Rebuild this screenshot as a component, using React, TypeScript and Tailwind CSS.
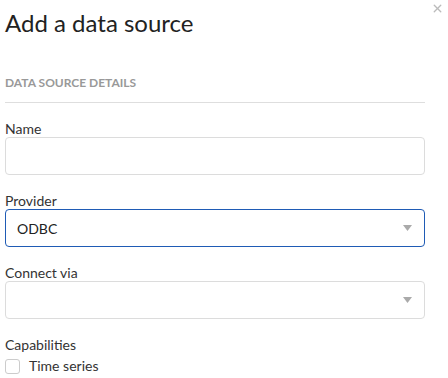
import { X } from "lucide-react";

function Field({ label, children }: { label: string; children: React.ReactNode }) {
  return (
    <div className="flex flex-col">
      <label className="text-[14px] leading-[16px] text-[#333]">{label}</label>
      {children}
    </div>
  );
}

function SelectBox({ value, focused }: { value?: string; focused?: boolean }) {
  return (
    <div
      className={`h-[38px] rounded-[4px] border flex items-center justify-between pl-[11px] pr-[12px] ${
        focused ? "border-[#1f5bb5]" : "border-[#dcdcdc]"
      }`}
    >
      <span className="text-[14px] text-[#222]">{value}</span>
      <svg width="9" height="6" viewBox="0 0 9 6" className="text-[#aaa]">
        <path d="M0 0h9L4.5 6z" fill="currentColor" />
      </svg>
    </div>
  );
}

export default function App() {
  return (
    <div
      className="relative w-[448px] h-[378px] overflow-hidden bg-white"
      style={{ fontFamily: "Lato, 'Noto Sans', sans-serif" }}
    >
      <button className="absolute top-[2px] right-[4px] text-[#bbb]">
        <X className="w-[13px] h-[13px]" strokeWidth={2.5} />
      </button>

      <div className="pl-[5px] pr-[23px] pt-[8px]">
        <h1 className="text-[24px] leading-[30px] text-[#222]">Add a data source</h1>

        <h2 className="mt-[37px] text-[12px] leading-[16px] font-bold uppercase text-[#999]">
          Data source details
        </h2>
        <div className="mt-[11px] h-px bg-[#dedede]" />

        <div className="mt-[18px] flex flex-col gap-[18px]">
          <Field label="Name">
            <input className="h-[38px] rounded-[4px] border border-[#dcdcdc] outline-none px-[11px]" />
          </Field>
          <Field label="Provider">
            <SelectBox value="ODBC" focused />
          </Field>
          <Field label="Connect via">
            <SelectBox />
          </Field>
          <div className="flex flex-col">
            <span className="text-[14px] leading-[16px] text-[#333]">Capabilities</span>
            <label className="mt-[5px] flex items-center gap-[9px]">
              <span className="w-[15px] h-[15px] rounded-[3px] border border-[#ccc]" />
              <span className="text-[14px] leading-[16px] text-[#333]">Time series</span>
            </label>
          </div>
        </div>
      </div>
    </div>
  );
}
